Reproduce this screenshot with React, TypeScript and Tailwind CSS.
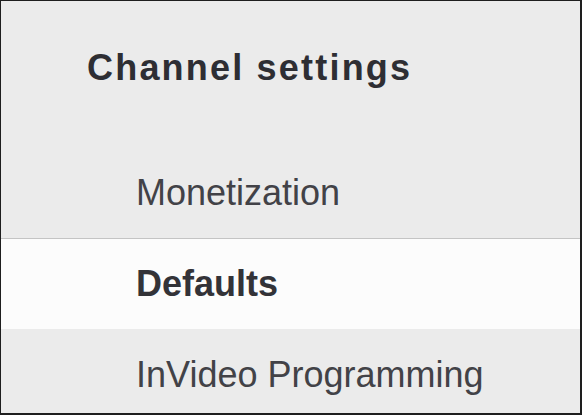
import React from 'react';

const items = [
    { label: 'Monetization', active: false },
    { label: 'Defaults', active: true },
    { label: 'InVideo Programming', active: false },
];

const App: React.FC = () => {
    return (
        <div className="w-[582px] h-[415px] overflow-hidden bg-[#1e1e1e] pl-px pt-px pr-[2px] pb-[2px]" style={{ fontFamily: '"Liberation Sans", Arial, sans-serif' }}>
            <div className="h-full bg-[#ebebeb] overflow-hidden">
                {/* Section title */}
                <div className="h-[146px] pl-[86px] pt-[45px]">
                    <h2 className="text-[36px] leading-[44px] font-bold tracking-[2.2px] text-[#2e2e33]">Channel settings</h2>
                </div>
                {/* Menu entries */}
                {items.map((item) => (
                    <div
                        key={item.label}
                        className={
                            item.active
                                ? 'h-[91px] flex items-center pl-[135px] bg-[#fcfcfc] border-t border-[#c4c4c4]'
                                : 'h-[91px] flex items-center pl-[135px] bg-[#ebebeb]'
                        }
                    >
                        <span
                            className={
                                item.active
                                    ? 'text-[36px] font-bold text-[#333338]'
                                    : 'text-[36px] text-[#424247]'
                            }
                        >
                            {item.label}
                        </span>
                    </div>
                ))}
            </div>
        </div>
    );
};

export default App;
